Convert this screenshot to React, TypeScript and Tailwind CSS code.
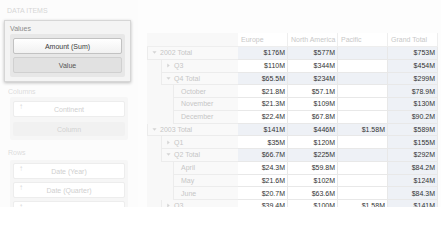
import React from 'react';

type Row = {
  label: string;
  level: 1 | 2 | 3;
  total?: boolean;
  arrow?: 'down' | 'right';
  values: [string, string, string, string];
};

const rows: Row[] = [
  { label: '2002 Total', level: 1, total: true, arrow: 'down', values: ['$176M', '$577M', '', '$753M'] },
  { label: 'Q3', level: 2, arrow: 'right', values: ['$110M', '$344M', '', '$454M'] },
  { label: 'Q4 Total', level: 2, total: true, arrow: 'down', values: ['$65.5M', '$234M', '', '$299M'] },
  { label: 'October', level: 3, values: ['$21.8M', '$57.1M', '', '$78.9M'] },
  { label: 'November', level: 3, values: ['$21.3M', '$109M', '', '$130M'] },
  { label: 'December', level: 3, values: ['$22.4M', '$67.8M', '', '$90.2M'] },
  { label: '2003 Total', level: 1, total: true, arrow: 'down', values: ['$141M', '$446M', '$1.58M', '$589M'] },
  { label: 'Q1', level: 2, arrow: 'right', values: ['$35M', '$120M', '', '$155M'] },
  { label: 'Q2 Total', level: 2, total: true, arrow: 'down', values: ['$66.7M', '$225M', '', '$292M'] },
  { label: 'April', level: 3, values: ['$24.3M', '$59.8M', '', '$84.2M'] },
  { label: 'May', level: 3, values: ['$21.6M', '$102M', '', '$124M'] },
  { label: 'June', level: 3, values: ['$20.7M', '$63.6M', '', '$84.3M'] },
  { label: 'Q3', level: 2, arrow: 'right', values: ['$39.4M', '$100M', '$1.58M', '$141M'] },
];

const font = { fontFamily: '"Liberation Sans", Arial, sans-serif' };

function Arrow({ dir }: { dir: 'down' | 'right' }) {
  return dir === 'down' ? (
    <svg width="5" height="5" viewBox="0 0 6 6" className="shrink-0">
      <path d="M0.5 1.5 L5.5 1.5 L3 4.5 Z" fill="#d4d4d4" />
    </svg>
  ) : (
    <svg width="5" height="5" viewBox="0 0 6 6" className="shrink-0">
      <path d="M1.5 0.5 L4.5 3 L1.5 5.5 Z" fill="#d4d4d4" />
    </svg>
  );
}

function FieldButton({ label, arrow }: { label: string; arrow?: boolean }) {
  return (
    <div className="relative h-[16px] shrink-0 bg-white border border-[#ededed] rounded-[2px] flex items-center justify-center text-[#cfcfcf]">
      {arrow && <span className="absolute left-[5px] top-[1px] text-[8px] text-[#d8d8d8]">↑</span>}
      {label}
    </div>
  );
}

export default function App() {
  return (
    <div className="w-[441px] h-[245px] bg-white text-[7px] leading-none" style={font}>
      <div className="h-[207px] overflow-hidden flex">
        {/* Data items panel */}
        <div className="w-[138px] shrink-0 bg-[#fcfcfc]">
          <div className="pl-[7px] pt-[7px] h-[20px] text-[#d6d6d6]">DATA ITEMS</div>
          <div className="ml-[4px] w-[127px] h-[62px] bg-[#f4f4f4] border border-[#d6d6d6] shadow-[0_1px_3px_rgba(0,0,0,0.25)] px-[5px] pt-[4px]">
            <div className="text-[#8a8a8a] h-[8px]">Values</div>
            <div className="mt-[1px] bg-[#e7e7e7] rounded-[2px] px-[3px] py-[4px] flex flex-col gap-[3px]">
              <div className="h-[16px] bg-gradient-to-b from-white to-[#f1f1f1] border border-[#c2c2c2] rounded-[2px] flex items-center justify-center text-[#3a3a3a]">
                Amount (Sum)
              </div>
              <div className="h-[16px] bg-[#e1e1e1] border border-[#d0d0d0] rounded-[2px] flex items-center justify-center text-[#555]">
                Value
              </div>
            </div>
          </div>
          <div className="pl-[8px] pt-[6px] h-[15px] text-[#dcdcdc]">Columns</div>
          <div className="ml-[10px] w-[118px] bg-[#f6f6f6] rounded-[2px] px-[3px] py-[4px] flex flex-col gap-[5px]">
            <FieldButton label="Continent" arrow />
            <div className="h-[14px] bg-[#f1f1f1] rounded-[2px] flex items-center justify-center text-[#d2d2d2]">Column</div>
          </div>
          <div className="pl-[8px] pt-[9px] h-[20px] text-[#dcdcdc]">Rows</div>
          <div className="ml-[10px] w-[118px] h-[60px] bg-[#f6f6f6] rounded-[2px] px-[3px] pt-[3px] flex flex-col gap-[3px]">
            <FieldButton label="Date (Year)" arrow />
            <FieldButton label="Date (Quarter)" arrow />
            <FieldButton label="Date (Month)" arrow />
          </div>
        </div>

        {/* Pivot grid */}
        <div className="flex-1 pl-[9px] pt-[33px] bg-[#fdfdfd]">
          <div className="w-[291px]">
            <div className="flex h-[14px] text-[#c8c8c8]">
              <div className="w-[91px] bg-[#f8f8f8] border-b border-[#eeeeee]" />
              {['Europe', 'North America', 'Pacific', 'Grand Total'].map((h) => (
                <div key={h} className="w-[50px] flex items-center pl-[3px] bg-white border-r border-b border-[#eeeeee] whitespace-nowrap">
                  {h}
                </div>
              ))}
            </div>
            {rows.map((r, i) => {
              const indent = r.level === 1 ? 0 : r.level === 2 ? 14 : 26;
              return (
                <div key={i} className="flex h-[12.75px]">
                  <div className="w-[91px] flex bg-[#f8f8f8]">
                    <div style={{ width: indent }} className="shrink-0" />
                    <div className="flex-1 flex items-center gap-[3px] pl-[4px] text-[#c6c6c6] border-l border-b border-[#ececec] bg-[#f9f9f9]">
                      {r.arrow && <Arrow dir={r.arrow} />}
                      {!r.arrow && <span className="w-0" />}
                      <span>{r.label}</span>
                    </div>
                  </div>
                  {r.values.map((v, j) => (
                    <div
                      key={j}
                      className={`w-[50px] flex items-center justify-end pr-[2px] text-[#333] border-r border-b border-[#e8e8e8] ${
                        r.total || j === 3 ? 'bg-[#eef1f6]' : 'bg-white'
                      }`}
                    >
                      {v}
                    </div>
                  ))}
                </div>
              );
            })}
          </div>
        </div>
      </div>
    </div>
  );
}
